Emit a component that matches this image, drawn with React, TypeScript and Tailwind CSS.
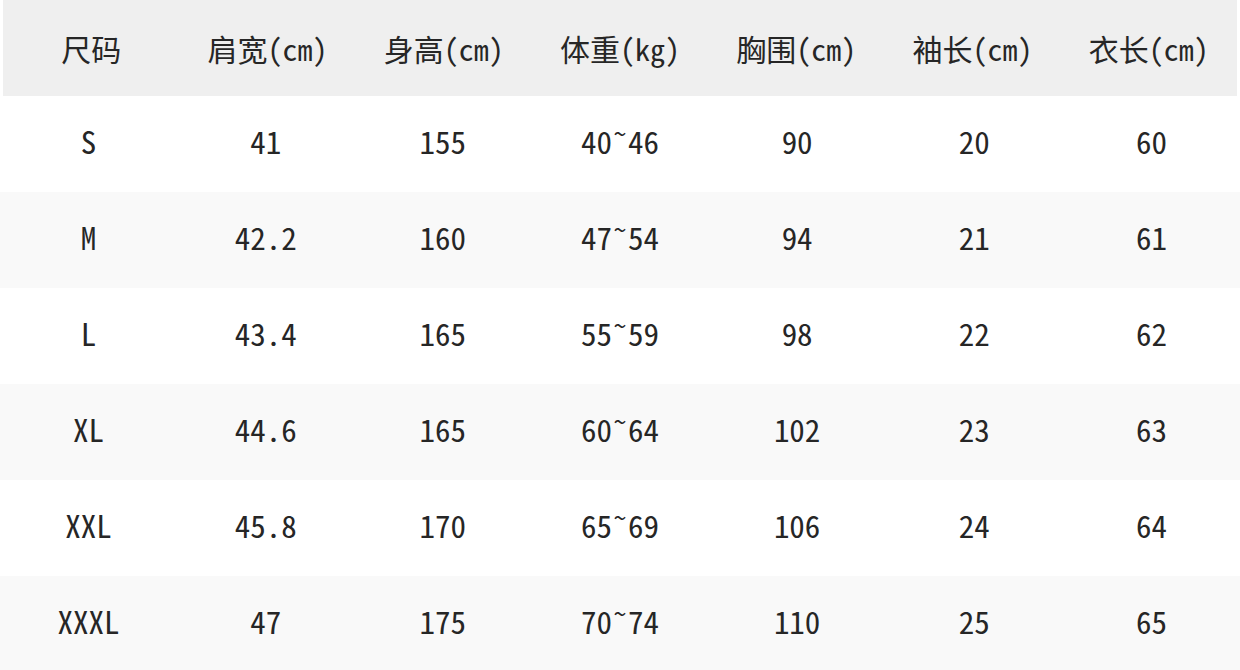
import React from 'react';

const headers = ['尺码', '肩宽(cm)', '身高(cm)', '体重(kg)', '胸围(cm)', '袖长(cm)', '衣长(cm)'];

const rows: string[][] = [
  ['S', '41', '155', '40~46', '90', '20', '60'],
  ['M', '42.2', '160', '47~54', '94', '21', '61'],
  ['L', '43.4', '165', '55~59', '98', '22', '62'],
  ['XL', '44.6', '165', '60~64', '102', '23', '63'],
  ['XXL', '45.8', '170', '65~69', '106', '24', '64'],
  ['XXXL', '47', '175', '70~74', '110', '25', '65'],
];

// the tilde sits high in the original font
const Cell: React.FC<{ value: string }> = ({ value }) => {
  if (!value.includes('~')) return <span>{value}</span>;
  const [a, b] = value.split('~');
  return (
    <span>
      {a}
      <span className="inline-block w-[16px] text-[24px] -translate-y-[11px]">~</span>
      {b}
    </span>
  );
};

const App: React.FC = () => {
  return (
    <div className="w-[1240px] h-[670px] overflow-hidden bg-white text-[#262626] font-['Noto_Sans_Mono_CJK_SC','Noto_Sans_CJK_SC','DejaVu_Sans_Mono',monospace]">
      {/* Header */}
      <div className="grid grid-cols-7 h-[96px] items-center bg-[#efefef] mx-[3px] text-[30px]">
        {headers.map((h) => (
          <div key={h} className="text-center">
            {h}
          </div>
        ))}
      </div>

      {/* Body */}
      {rows.map((row, i) => (
        <div
          key={row[0]}
          className={`grid grid-cols-7 h-[96px] items-center pb-[5px] text-[31px] ${i % 2 === 1 ? 'bg-[#f9f9f9]' : 'bg-white'}`}
        >
          {row.map((v, j) => (
            <div key={j} className="text-center">
              <Cell value={v} />
            </div>
          ))}
        </div>
      ))}
    </div>
  );
};

export default App;
